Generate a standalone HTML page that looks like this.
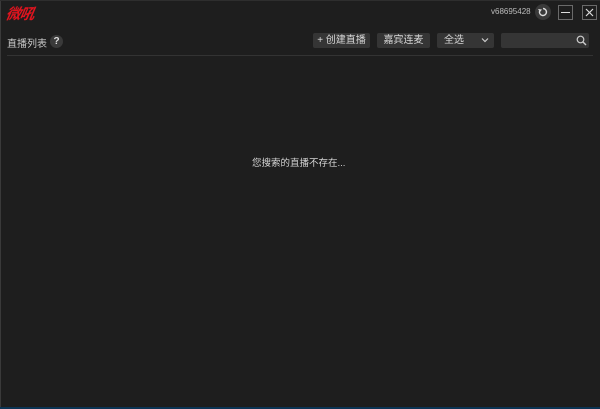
<!DOCTYPE html>
<html><head><meta charset="utf-8"><style>
*{margin:0;padding:0;box-sizing:border-box}
body{width:600px;height:409px;background:#1e1e1e;position:relative;overflow:hidden;font-family:"Liberation Sans","Noto Sans CJK SC",sans-serif;color:#cfcfcf}
.a{position:absolute}
.btn{position:absolute;top:33px;height:15px;background:#353535;border-radius:2px;font-size:10px;line-height:15px;color:#d8d8d8;text-align:center}
</style></head><body>
<div class="a" style="left:0;top:0;width:1px;height:409px;background:#3a3a3a"></div>
<div class="a" style="left:0;top:0;width:600px;height:1px;background:#2e2e2e"></div>
<div class="a" style="left:0;top:407px;width:600px;height:2px;background:#0c3454"></div>
<div class="a" style="left:6px;top:3px;font-size:15px;font-weight:bold;font-style:italic;color:#e0141e;letter-spacing:-1px;transform:skewX(-10deg)">微吼</div>
<div class="a" style="left:7px;top:35px;font-size:10px;color:#c8c8c8">直播列表</div>
<div class="a" style="left:50px;top:35px;width:13px;height:13px;border-radius:50%;background:#3a3a3a;color:#ddd;font-size:10px;font-weight:bold;text-align:center;line-height:13px">?</div>
<div class="a" style="left:7px;top:55px;width:586px;height:1px;background:#333"></div>
<div class="a" style="left:491px;top:7px;font-size:8px;color:#bdbdbd">v68695428</div>
<div class="a" style="left:535px;top:4px;width:16px;height:16px;border-radius:50%;background:#3a3a3a"></div>
<svg class="a" style="left:535px;top:4px" width="16" height="16" viewBox="0 0 16 16"><path d="M8 4.5 A3.5 3.5 0 1 1 4.6 7" fill="none" stroke="#ddd" stroke-width="1.4"/><path d="M3 5 L5 8 L7 5.5Z" fill="#ddd"/></svg>
<div class="a" style="left:558px;top:5px;width:15px;height:15px;border:1px solid #6a6a6a"></div>
<div class="a" style="left:561px;top:12px;width:9px;height:1px;background:#ddd"></div>
<div class="a" style="left:582px;top:5px;width:15px;height:15px;border:1px solid #6a6a6a"></div>
<svg class="a" style="left:582px;top:5px" width="15" height="15" viewBox="0 0 15 15"><path d="M4 4 L11 11 M11 4 L4 11" stroke="#ddd" stroke-width="1.2"/></svg>
<div class="btn" style="left:313px;width:57px">+ 创建直播</div>
<div class="btn" style="left:377px;width:53px">嘉宾连麦</div>
<div class="btn" style="left:437px;width:57px;text-align:left;padding-left:7px">全选</div>
<svg class="a" style="left:481px;top:37px" width="8" height="6" viewBox="0 0 8 6"><path d="M1 1.5 L4 4.5 L7 1.5" fill="none" stroke="#ccc" stroke-width="1.2"/></svg>
<div class="btn" style="left:501px;width:88px"></div>
<svg class="a" style="left:576px;top:35px" width="11" height="11" viewBox="0 0 11 11"><circle cx="4.5" cy="4.5" r="3.3" fill="none" stroke="#ccc" stroke-width="1.2"/><path d="M7 7 L10 10" stroke="#ccc" stroke-width="1.4"/></svg>
<div class="a" style="left:252px;top:155px;font-size:9.5px;color:#d4d4d4">您搜索的直播不存在...</div>
</body></html>
